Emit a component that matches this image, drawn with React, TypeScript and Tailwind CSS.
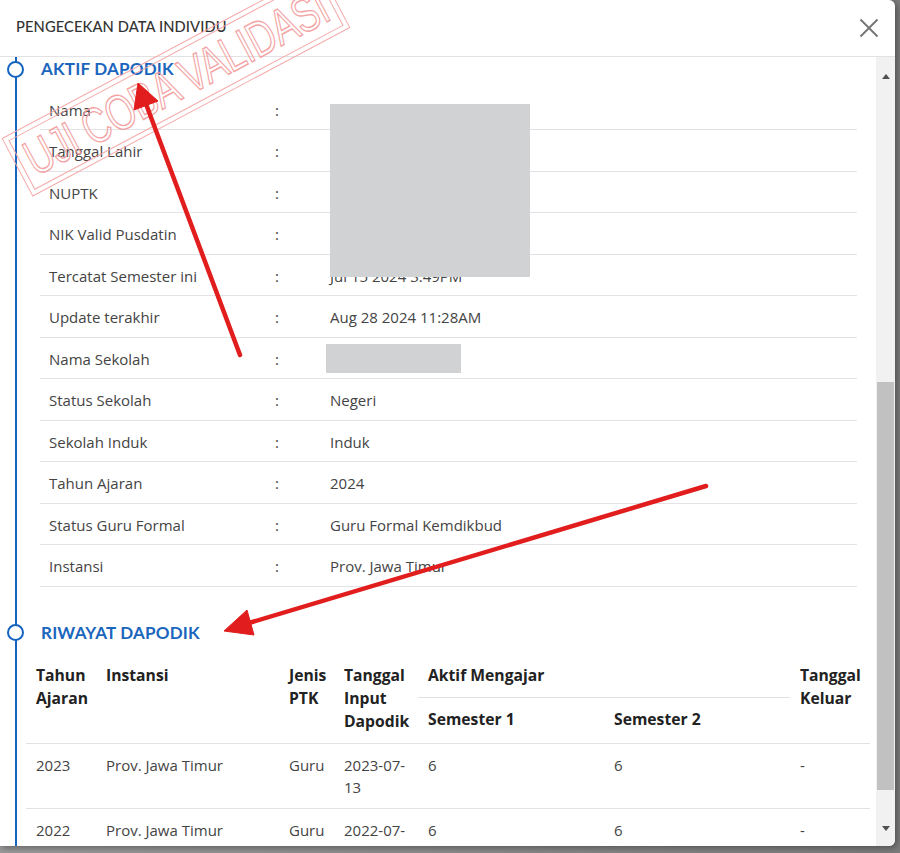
import { Fragment } from "react";

const profil = [
  { label: "Nama", value: "XXXXXXXX XXXXXXXX XXXXXX" },
  { label: "Tanggal Lahir", value: "" },
  { label: "NUPTK", value: "" },
  { label: "NIK Valid Pusdatin", value: "" },
  { label: "Tercatat Semester ini", value: "Jul 15 2024 3:49PM" },
  { label: "Update terakhir", value: "Aug 28 2024 11:28AM" },
  { label: "Nama Sekolah", value: null },
  { label: "Status Sekolah", value: "Negeri" },
  { label: "Sekolah Induk", value: "Induk" },
  { label: "Tahun Ajaran", value: "2024" },
  { label: "Status Guru Formal", value: "Guru Formal Kemdikbud" },
  { label: "Instansi", value: "Prov. Jawa Timur" },
];

const riwayat = [
  { tahun: "2023", instansi: "Prov. Jawa Timur", ptk: "Guru", input: "2023-07-13", s1: "6", s2: "6", keluar: "-" },
  { tahun: "2022", instansi: "Prov. Jawa Timur", ptk: "Guru", input: "2022-07-14", s1: "6", s2: "6", keluar: "-" },
  { tahun: "2021", instansi: "Prov. Jawa Timur", ptk: "Guru", input: "2021-07-19", s1: "6", s2: "6", keluar: "-" },
];

function SectionTitle({ title }: { title: string }) {
  return (
    <div className="relative flex h-6 items-center">
      <span className="ml-[7px] size-[17px] shrink-0 rounded-full border-2 border-[#1565c0] bg-white" />
      <h3 className="ml-[17px] font-['Lato',sans-serif] text-[17px] font-bold tracking-[0.2px] text-[#1a66bd]">
        {title}
      </h3>
    </div>
  );
}

function Watermark() {
  return (
    <div className="pointer-events-none absolute left-[-4px] top-[50px] h-[66px] w-[360px] rotate-[-28deg] border-[1.5px] border-[#f5a3a3] p-[4px] opacity-90">
      <div className="flex h-full items-center justify-center overflow-visible border-[1.5px] border-[#f5a3a3]">
        <span className="inline-block scale-x-[0.74] whitespace-nowrap font-['Liberation_Sans',Arial,sans-serif] text-[50px] leading-none tracking-[-0.5px] text-transparent [-webkit-text-stroke:1.4px_#f29a9a]">
          UJI COBA VALIDASI
        </span>
      </div>
    </div>
  );
}

function Arrows() {
  return (
    <svg className="pointer-events-none absolute inset-0" width="895" height="846" viewBox="0 0 895 846">
      <g fill="#e11d1d" stroke="#e11d1d">
        <line x1="240" y1="355" x2="146" y2="104" strokeWidth="4.5" strokeLinecap="round" />
        <polygon points="138,83 158,101 134,110" strokeWidth="1" />
        <line x1="706" y1="486" x2="249" y2="623" strokeWidth="4.5" strokeLinecap="round" />
        <polygon points="224,631 247,610 254,635" strokeWidth="1" />
      </g>
    </svg>
  );
}

export default function App() {
  return (
    <div className="h-[853px] w-[900px] bg-gradient-to-r from-[#9a9a9a] to-[#7b7b7b] font-['Open_Sans',sans-serif]">
      <div className="relative flex h-[846px] w-[895px] flex-col overflow-hidden rounded-r-[6px] bg-white shadow-[2px_2px_6px_rgba(0,0,0,0.35)]">
        {/* header */}
        <div className="flex h-[57px] shrink-0 items-center justify-between border-b border-[#e2e2e4] pb-[3px] pl-4 pr-[16px]">
          <h2 className="font-['Lato',sans-serif] text-[14.7px] font-medium tracking-[0.1px] text-[#333]">
            PENGECEKAN DATA INDIVIDU
          </h2>
          <svg width="20" height="20" viewBox="0 0 20 20" className="mt-[3px]">
            <path d="M1.5 1.5 L18.5 18.5 M18.5 1.5 L1.5 18.5" stroke="#777" strokeWidth="2" />
          </svg>
        </div>

        {/* body */}
        <div className="flex min-h-0 flex-1">
          <div className="relative min-w-0 flex-1 overflow-hidden">
            <div className="absolute bottom-0 left-[14.5px] top-0 w-[2px] bg-[#1565c0]" />

            <SectionTitle title="AKTIF DAPODIK" />

            <div className="relative ml-[40px] mr-[19px] mt-[7.5px]">
              {profil.map((row) => (
                <div
                  key={row.label}
                  className="grid h-[41.5px] grid-cols-[235px_55px_1fr] items-center border-b border-[#e3e3e7] pt-[2px] text-[15px] text-[#444]"
                >
                  <span className="pl-[9px]">{row.label}</span>
                  <span>:</span>
                  {row.value === null ? (
                    <span className="ml-[-4px] h-[29px] w-[135px] bg-[#d1d2d4]" />
                  ) : (
                    <span className="whitespace-nowrap">{row.value}</span>
                  )}
                </div>
              ))}
              <div className="absolute left-[290px] top-[15.5px] h-[173px] w-[200px] bg-[#d1d2d4]" />
            </div>

            <div className="mt-[34px]">
              <SectionTitle title="RIWAYAT DAPODIK" />
            </div>

            <table className="ml-[26px] mt-[9px] w-[844px] table-fixed border-collapse text-left">
              <colgroup>
                <col className="w-[70px]" />
                <col className="w-[183px]" />
                <col className="w-[55px]" />
                <col className="w-[84px]" />
                <col className="w-[186px]" />
                <col className="w-[186px]" />
                <col className="w-[80px]" />
              </colgroup>
              <thead className="text-[15.7px] font-bold leading-[23px] text-[#222]">
                <tr>
                  <th rowSpan={2} className="border-b border-[#e3e3e7] px-[10px] py-[10px] align-top">Tahun Ajaran</th>
                  <th rowSpan={2} className="border-b border-[#e3e3e7] px-[10px] py-[10px] align-top">Instansi</th>
                  <th rowSpan={2} className="border-b border-[#e3e3e7] px-[10px] py-[10px] align-top">Jenis PTK</th>
                  <th rowSpan={2} className="border-b border-[#e3e3e7] px-[10px] py-[10px] align-top">Tanggal Input Dapodik</th>
                  <th colSpan={2} className="border-b border-[#e3e3e7] px-[10px] py-[10px] align-top">Aktif Mengajar</th>
                  <th rowSpan={2} className="border-b border-[#e3e3e7] px-[10px] py-[10px] align-top">Tanggal Keluar</th>
                </tr>
                <tr>
                  <th className="border-b border-[#e3e3e7] px-[10px] py-[10px] align-top">Semester 1</th>
                  <th className="border-b border-[#e3e3e7] px-[10px] py-[10px] align-top">Semester 2</th>
                </tr>
              </thead>
              <tbody className="text-[15px] leading-[22px] text-[#444]">
                {riwayat.map((r) => (
                  <Fragment key={r.tahun}>
                    <tr className="border-b border-[#e3e3e7]">
                      <td className="px-[10px] py-[10px] align-top">{r.tahun}</td>
                      <td className="px-[10px] py-[10px] align-top">{r.instansi}</td>
                      <td className="px-[10px] py-[10px] align-top">{r.ptk}</td>
                      <td className="px-[10px] py-[10px] align-top">{r.input}</td>
                      <td className="px-[10px] py-[10px] align-top">{r.s1}</td>
                      <td className="px-[10px] py-[10px] align-top">{r.s2}</td>
                      <td className="px-[10px] py-[10px] align-top">{r.keluar}</td>
                    </tr>
                  </Fragment>
                ))}
              </tbody>
            </table>
          </div>

          {/* scrollbar */}
          <div className="flex w-[19px] shrink-0 flex-col bg-[#f1f1f1]">
            <div className="flex h-[22px] items-end justify-center">
              <span className="h-0 w-0 border-x-[4.5px] border-b-[5px] border-x-transparent border-b-[#505050]" />
            </div>
            <div className="flex-1 px-[1px]">
              <div className="mt-[303px] h-[408px] bg-[#c1c1c1]" />
            </div>
            <div className="flex h-[22px] items-start justify-center pt-[2px]">
              <span className="h-0 w-0 border-x-[4.5px] border-t-[5px] border-x-transparent border-t-[#505050]" />
            </div>
          </div>
        </div>

        <Watermark />
        <Arrows />
      </div>
    </div>
  );
}
